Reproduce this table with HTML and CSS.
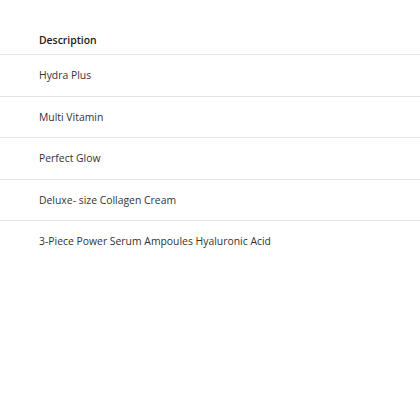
FILE: index.html
```html
<!DOCTYPE html>
<html>
<head>
<meta charset="utf-8">
<link rel="stylesheet" href="styles.css">
</head>
<body>
<div class="table">
  <div class="head">Description</div>
  <div class="row">Hydra Plus</div>
  <div class="row">Multi Vitamin</div>
  <div class="row">Perfect Glow</div>
  <div class="row">Deluxe- size Collagen Cream</div>
  <div class="row last">3-Piece Power Serum Ampoules Hyaluronic Acid</div>
</div>
</body>
</html>
```

FILE: styles.css
```css
html, body {
  margin: 0;
  background: #ffffff;
}
.table {
  display: flex;
  flex-direction: column;
  font-family: "Open Sans", "Liberation Sans", sans-serif;
  font-size: 10.4px;
  line-height: 16px;
  color: #333333;
}
.head {
  padding: 32px 39px 6px;
  font-weight: 600;
  color: #1a1a1a;
  border-bottom: 1px solid #e3e3e3;
}
.row {
  padding: 12.25px 39px;
  border-bottom: 1px solid #e3e3e3;
}
.row.last {
  border-bottom: none;
}
```
